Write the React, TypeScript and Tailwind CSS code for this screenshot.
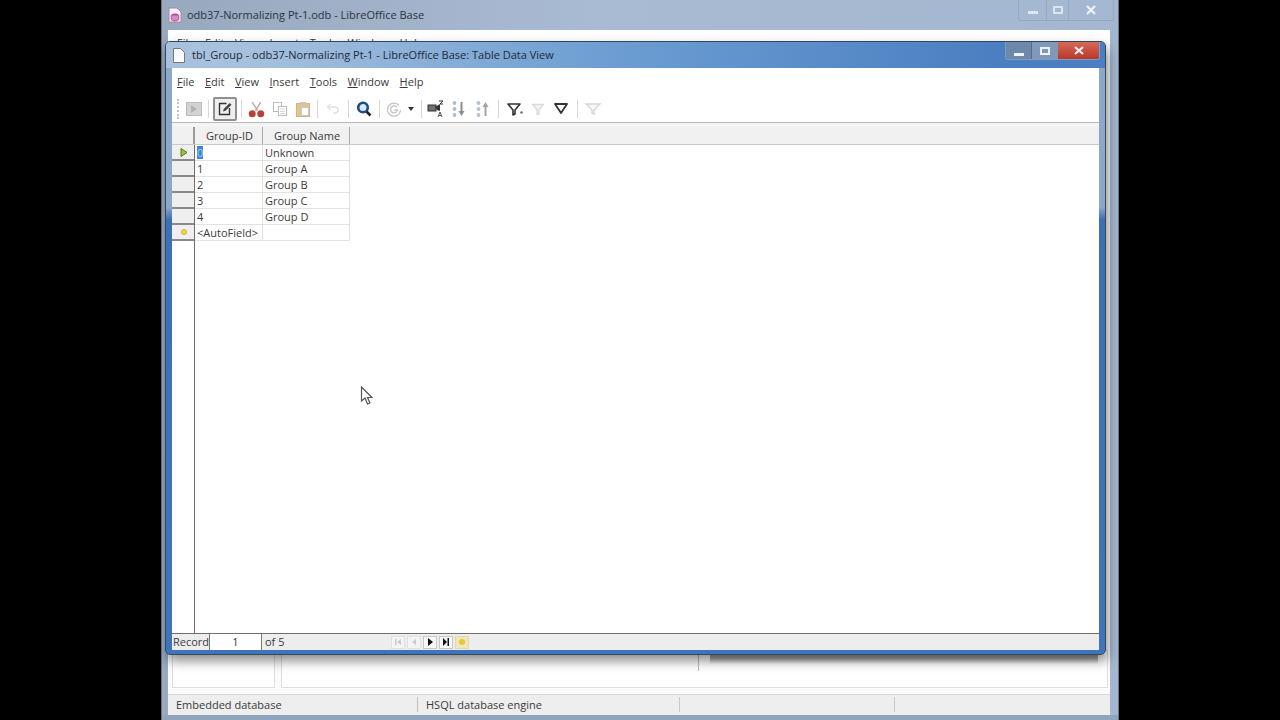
const FONT = "font-['Open_Sans','Noto_Sans',sans-serif]";

function Sep({ ml = 1, mr = 1 }: { ml?: number; mr?: number }) {
  return <div className="w-px h-[18px] bg-[#d8d8d8] shrink-0" style={{ marginLeft: ml, marginRight: mr }} />;
}

function Slot({ w, children }: { w: number; children: React.ReactNode }) {
  return (
    <div className="flex items-center justify-center h-[24px] shrink-0" style={{ width: w }}>
      {children}
    </div>
  );
}

function Toolbar() {
  return (
    <div className="h-[26px] flex items-center pl-[5px] shrink-0 bg-white">
      <div className="w-[3px] h-[20px] border-l-2 border-dotted border-[#c4c4c4] shrink-0" />
      <Slot w={27}>
        <svg width="16" height="16" viewBox="0 0 16 16">
          <rect x="0.5" y="1.5" width="15" height="13" fill="#d2d4d4" stroke="#bbbdbd" />
          <path d="M5 4l6 4-6 4z" fill="#b2b4b4" />
        </svg>
      </Slot>
      <Sep />
      <div className="w-[24px] h-[24px] ml-[3px] mr-[3px] rounded-[2px] border-2 border-[#8f8f8f] bg-[#efefef] flex items-center justify-center shrink-0">
        <svg width="16" height="16" viewBox="0 0 16 16" fill="none">
          <path d="M9.5 2.5H2.5v11h10V7" stroke="#333" strokeWidth="1.4" />
          <path d="M6 10.5l.7-2.5 6-6 1.8 1.8-6 6z" fill="#444" />
        </svg>
      </div>
      <Sep />
      <Slot w={26}>
        <svg width="17" height="17" viewBox="0 0 16 16" fill="none">
          <path d="M4 1l5 8M12 1L7 9" stroke="#b9aaaa" strokeWidth="1.4" />
          <circle cx="4" cy="12" r="3.3" fill="#b9403a" />
          <circle cx="12" cy="12" r="3.3" fill="#b9403a" />
        </svg>
      </Slot>
      <Slot w={21}>
        <svg width="16" height="16" viewBox="0 0 16 16" fill="#fff" stroke="#bcbcbc">
          <rect x="1.5" y="1.5" width="8" height="9" />
          <rect x="6.5" y="5.5" width="8" height="9" />
          <path d="M8 8h5M8 10.500h5M8 12.500h5" stroke="#d4d4d4" />
        </svg>
      </Slot>
      <Slot w={26}>
        <svg width="16" height="16" viewBox="0 0 16 16">
          <rect x="1.500" y="2.500" width="13" height="13" fill="#e4c48c" stroke="#d1b47e" />
          <rect x="5" y="1" width="6" height="3" fill="#c9c4b8" />
          <rect x="6.500" y="6.500" width="7" height="8" fill="#fff" stroke="#c8c8c8" />
        </svg>
      </Slot>
      <Sep />
      <Slot w={28}>
        <svg width="16" height="16" viewBox="0 0 16 16" fill="none" stroke="#e3e3e3" strokeWidth="1.6">
          <path d="M3 6h7a3 3 0 0 1 0 6H8" />
          <path d="M5.500 3L2.500 6l3 3" />
        </svg>
      </Slot>
      <Sep />
      <Slot w={28}>
        <svg width="18" height="18" viewBox="0 0 18 18" fill="none">
          <circle cx="8" cy="7.500" r="4.800" stroke="#1d4f86" strokeWidth="2.600" fill="#dbe7f2" />
          <path d="M11.500 11.500l4 4" stroke="#222" strokeWidth="2.600" />
        </svg>
      </Slot>
      <Sep />
      <Slot w={26}>
        <svg width="16" height="16" viewBox="0 0 16 16" fill="none" stroke="#c2c2c2" strokeWidth="1.300">
          <path d="M13 4.500A6.500 6.500 0 1 0 14.500 9" />
          <path d="M11 6.500A3.500 3.500 0 1 0 11.500 9H8.500" />
        </svg>
      </Slot>
      <div className="w-[8px] flex justify-center shrink-0">
        <svg width="6" height="4" viewBox="0 0 6 4"><path d="M0 0h6L3 4z" fill="#333" /></svg>
      </div>
      <Sep ml={6} />
      <Slot w={26}>
        <svg width="18" height="18" viewBox="0 0 18 18">
          <rect x="1" y="5" width="8" height="6" fill="#6d7075" stroke="#333" />
          <path d="M8 7l5-3v7l-3-1z" fill="#333" />
          <path d="M12 1h4l-3 3h3" fill="none" stroke="#333" strokeWidth="1" />
          <path d="M11 17l2-5 2 5M11.700 15.500h2.600" fill="none" stroke="#555" strokeWidth="1" />
        </svg>
      </Slot>
      <Slot w={20}>
        <svg width="16" height="18" viewBox="0 0 16 18">
          <circle cx="3.500" cy="3" r="1.900" fill="#a8bdd6" />
          <circle cx="3.500" cy="9" r="1.900" fill="#a8bdd6" />
          <circle cx="3.500" cy="15" r="1.900" fill="#a8bdd6" />
          <path d="M10.500 2v12" stroke="#8c8c8c" strokeWidth="2" />
          <path d="M7.500 11l3 5 3-5z" fill="#8c8c8c" />
        </svg>
      </Slot>
      <Slot w={28}>
        <svg width="16" height="18" viewBox="0 0 16 18">
          <circle cx="3.500" cy="3" r="1.900" fill="#b4c2d2" />
          <circle cx="3.500" cy="9" r="1.900" fill="#b4c2d2" />
          <circle cx="3.500" cy="15" r="1.900" fill="#b4c2d2" />
          <path d="M10.500 16V4" stroke="#a4a4a4" strokeWidth="2" />
          <path d="M7.500 7l3-5 3 5z" fill="#a4a4a4" />
        </svg>
      </Slot>
      <Sep />
      <Slot w={30}>
        <svg width="18" height="16" viewBox="0 0 18 16" fill="none">
          <path d="M2 3h12l-5 6v4l-2 1V9z" stroke="#333" strokeWidth="1.600" fill="#fff" strokeLinejoin="round" />
          <circle cx="15.500" cy="11.500" r="1.200" fill="#666" />
        </svg>
      </Slot>
      <Slot w={16}>
        <svg width="16" height="16" viewBox="0 0 18 16" fill="none">
          <path d="M3 3h12l-5 6v5H8V9z" stroke="#dadada" strokeWidth="1.600" fill="#f4f4f4" />
        </svg>
      </Slot>
      <Slot w={30}>
        <svg width="18" height="16" viewBox="0 0 18 16" fill="none">
          <path d="M3 3h12l-6 9z" stroke="#333" strokeWidth="1.800" fill="#fff" strokeLinejoin="round" />
        </svg>
      </Slot>
      <Sep />
      <Slot w={28}>
        <svg width="18" height="16" viewBox="0 0 18 16" fill="none">
          <path d="M2 3h14l-6 6v4l-2-1V9z" stroke="#d6d6d6" strokeWidth="1.400" fill="#f8f8f8" />
        </svg>
      </Slot>
    </div>
  );
}

const rows = [
  ["0", "Unknown"],
  ["1", "Group A"],
  ["2", "Group B"],
  ["3", "Group C"],
  ["4", "Group D"],
  ["<AutoField>", ""],
];

function Grid() {
  return (
    <div className="flex-1 flex flex-col min-h-0 bg-white">
      <div className="h-[5px] shrink-0 bg-[#f4f4f4] border-t border-[#b8b8b8]" />
      <div className="h-[18px] flex shrink-0 bg-[#f1f1f1] border-b border-[#c9c9c9]">
        <div className="w-[23px] border-r-2 border-[#9a9a9a]" />
        <div className="w-[68px] border-r border-[#a8a8a8] text-center leading-[17px] pl-[2px]">Group-ID</div>
        <div className="w-[87px] border-r border-[#a8a8a8] text-center leading-[17px] pl-[2px]">Group Name</div>
      </div>
      <div className="flex-1 flex min-h-0">
        <div className="w-[23px] shrink-0 border-r border-[#6e6e6e]">
          {rows.map((r, i) => (
            <div key={i} className="h-[16px] bg-[#efefef] border-b-2 border-[#8a8a8a] flex items-center justify-center pl-[1px]">
              {i === 0 && (
                <svg width="8" height="9" viewBox="0 0 8 9">
                  <path d="M1 .5l6 4-6 4z" fill="#a2c23a" stroke="#55771f" strokeWidth="1" />
                </svg>
              )}
              {i === 5 && <div className="w-[6px] h-[6px] rounded-full bg-[#ecd443] border border-[#d2b62d]" />}
            </div>
          ))}
        </div>
        <div className="w-[155px] shrink-0">
          {rows.map((r, i) => (
            <div key={i} className="h-[16px] flex border-b border-[#e2e2e2] leading-[16px]">
              <div className="w-[68px] border-r border-[#e2e2e2] pl-[2px] whitespace-nowrap">
                {i === 0 ? <span className="bg-[#3d86d6] text-[#a9cdf2] inline-block w-[6px] h-[13px] leading-[13px]">0</span> : r[0]}
              </div>
              <div className="w-[87px] border-r border-[#e2e2e2] pl-[2px] whitespace-nowrap">{r[1]}</div>
            </div>
          ))}
        </div>
      </div>
    </div>
  );
}

function Nav({ dim, children }: { dim?: boolean; children: React.ReactNode }) {
  return (
    <div className={`w-[14px] h-[13px] flex items-center justify-center border ${dim ? "border-[#e0e0e0] bg-[#f4f4f4]" : "border-[#c8c8c8] bg-[#f8f8f8]"} mr-[2px]`}>
      {children}
    </div>
  );
}

function RecordBar() {
  return (
    <div className="h-[17px] flex items-center bg-[#ededed] border-t border-[#6e6e6e] shrink-0">
      <div className="w-[38px] h-[16px] pl-[1px] leading-[16px] border-r border-[#777] shrink-0 whitespace-nowrap">Record</div>
      <div className="w-[52px] h-[16px] bg-white text-center leading-[16px] border-r border-[#777] shrink-0">1</div>
      <div className="w-[129px] pl-[3px] leading-[16px] shrink-0">of 5</div>
      <Nav dim>
        <svg width="8" height="8" viewBox="0 0 8 8" fill="#c6cad0"><path d="M1 1h1.500v6H1zM7 1v6L3 4z" /></svg>
      </Nav>
      <Nav dim>
        <svg width="8" height="8" viewBox="0 0 8 8" fill="#c6cad0"><path d="M6 1v6L2 4z" /></svg>
      </Nav>
      <Nav>
        <svg width="8" height="8" viewBox="0 0 8 8" fill="#111"><path d="M2 0v8l5-4z" /></svg>
      </Nav>
      <Nav>
        <svg width="8" height="8" viewBox="0 0 8 8" fill="#111"><path d="M1 0v8l4-4zM5.500 0H7v8H5.500z" /></svg>
      </Nav>
      <div className="w-[14px] h-[13px] flex items-center justify-center border border-[#e0d7b8] bg-[#f3e6b5]">
        <div className="w-[6px] h-[6px] rounded-full bg-[#e8c53a]" />
      </div>
    </div>
  );
}

const MENU = [["F", "ile"], ["E", "dit"], ["V", "iew"], ["I", "nsert"], ["T", "ools"], ["W", "indow"], ["H", "elp"]];

export default function App() {
  return (
    <div className={`w-[1280px] h-[720px] bg-black overflow-hidden flex justify-center text-[11px] text-[#3a3a3a] ${FONT}`}>
      <div className="relative w-[958px] h-[720px] flex flex-col bg-[linear-gradient(90deg,#97a8bf,#a9bbd2_45%,#a3b7d0)] border-x border-[#6a7482]">
        <div className="h-[30px] flex items-center pl-[6px] shrink-0 relative">
          <svg width="14" height="16" viewBox="0 0 14 16" className="mr-[5px]">
            <path d="M1 1h8l4 4v10H1z" fill="#f6eef6" stroke="#a98aa9" />
            <ellipse cx="7" cy="8.500" rx="3.800" ry="2" fill="#b04a9c" />
            <path d="M3.200 8.500v3.500c0 2.500 7.600 2.500 7.600 0V8.500" fill="#d88ac8" stroke="#a03f8f" strokeWidth="0.800" />
          </svg>
          <span className="text-[#2b3440] whitespace-nowrap">odb37-Normalizing Pt-1.odb - LibreOffice Base</span>
          <div className="absolute right-[4px] top-0 flex h-[21px] w-[96px] border-x border-b border-[#97a9c1] rounded-b-[3px]">
            <div className="w-[27px] flex items-center justify-center"><div className="w-[10px] h-[3px] mt-[4px] bg-[#dfe6ee]" /></div>
            <div className="w-[23px] border-x border-[#97a9c1] flex items-center justify-center"><div className="w-[10px] h-[8px] border-2 border-[#dfe6ee] rounded-[1px]" /></div>
            <div className="flex-1 flex items-center justify-center">
              <svg width="10" height="10" viewBox="0 0 10 10"><path d="M1 1l8 8M9 1l-8 8" stroke="#eef2f7" strokeWidth="2.200" /></svg>
            </div>
          </div>
        </div>
        <div className="flex-1 ml-[6px] mr-[8px] min-h-0 flex flex-col bg-[#fbfbfb]">
          <div className="h-[26px] flex items-center pl-[9px] gap-[10.5px] shrink-0 bg-white">
            {MENU.map(([a, b]) => (
              <span key={a + b}>{a}{b}</span>
            ))}
          </div>
          <div className="flex-1" />
          <div className="h-[38px] ml-[4px] mr-[2px] mb-[6px] flex gap-[6px] shrink-0">
            <div className="w-[103px] bg-white border border-[#dedede]" />
            <div className="flex-1 relative bg-white border border-[#dedede]">
              <div className="absolute left-[416px] top-0 w-px h-[20px] bg-[#bdbdbd]" />
              <div className="absolute left-[428px] right-[9px] top-0 h-[13px] bg-[linear-gradient(180deg,#8e8e8e,#a8a8a8_55%,#ffffff)]" />
            </div>
          </div>
          <div className="h-[21px] flex items-center pb-[2px] bg-[#eeeeee] border-t border-[#d9d9d9] shrink-0">
            <div className="w-[250px] pl-[8px] border-r border-[#bdbdbd] h-[15px] leading-[15px]">Embedded database</div>
            <div className="w-[262px] pl-[8px] border-r border-[#c9c9c9] h-[15px] leading-[15px]">HSQL database engine</div>
            <div className="w-[215px] border-r border-[#c9c9c9] h-[15px]" />
            <div className="flex-1" />
          </div>
        </div>
        <div className="h-[5px] shrink-0 bg-[#8fa4bd]" />

        <div className="absolute left-[3px] top-[41px] w-[941px] h-[614px] flex flex-col rounded-[5px] border border-[#33475f] bg-[linear-gradient(180deg,#8ba8c9_0%,#8ba8c9_27%,#3c70b5_29%,#3f74b9_100%)] shadow-[2px_6px_12px_rgba(0,0,0,0.45)] px-[6px] pb-[4px]">
          <div className="h-[26px] -mx-[6px] px-[6px] rounded-t-[4px] flex items-center shrink-0 relative bg-[linear-gradient(90deg,#a8c2de,#a5c0dd_10%,#6f9fd3_45%,#4a7fc1_88%,#4a7fc1)]">
            <svg width="12" height="15" viewBox="0 0 12 15" className="mr-[7px] ml-[1px]">
              <path d="M.5.500h7l4 4v10H.500z" fill="#fafafa" stroke="#777" />
            </svg>
            <span className="text-[#1d2a3a] whitespace-nowrap">tbl_Group - odb37-Normalizing Pt-1 - LibreOffice Base: Table Data View</span>
            <div className="absolute right-[5px] top-0 flex h-[18px] w-[95px] rounded-b-[3px] overflow-hidden border-x border-b border-[#7f9dc2]">
              <div className="w-[25px] bg-[#6e88ab] flex items-end justify-center pb-[3px]"><div className="w-[10px] h-[3px] bg-[#f0f3f7]" /></div>
              <div className="w-[27px] bg-[#8199b8] border-l border-[#566c8a] flex items-center justify-center"><div className="w-[10px] h-[8px] border-2 border-[#eef2f7]" /></div>
              <div className="flex-1 bg-[linear-gradient(180deg,#d46a58,#b9382a)] flex items-center justify-center">
                <svg width="10" height="9" viewBox="0 0 10 9"><path d="M1 1l8 7M9 1l-8 7" stroke="#f7ecea" strokeWidth="2.200" /></svg>
              </div>
            </div>
          </div>
          <div className="flex-1 flex flex-col min-h-0 bg-white">
            <div className="h-[28px] flex items-center pl-[5px] gap-[10.5px] shrink-0">
              {MENU.map(([a, b]) => (
                <span key={a + b}><span className="underline">{a}</span>{b}</span>
              ))}
            </div>
            <Toolbar />
            <Grid />
            <RecordBar />
          </div>
        </div>
        <svg width="17" height="20" viewBox="0 0 17 20" className="absolute left-[198px] top-[386px]">
          <path d="M1.500 1v14l3.500-3 2.500 6 2.500-1-2.500-5.500h4.500z" fill="#fff" stroke="#555" strokeWidth="1.200" />
        </svg>
      </div>
    </div>
  );
}
